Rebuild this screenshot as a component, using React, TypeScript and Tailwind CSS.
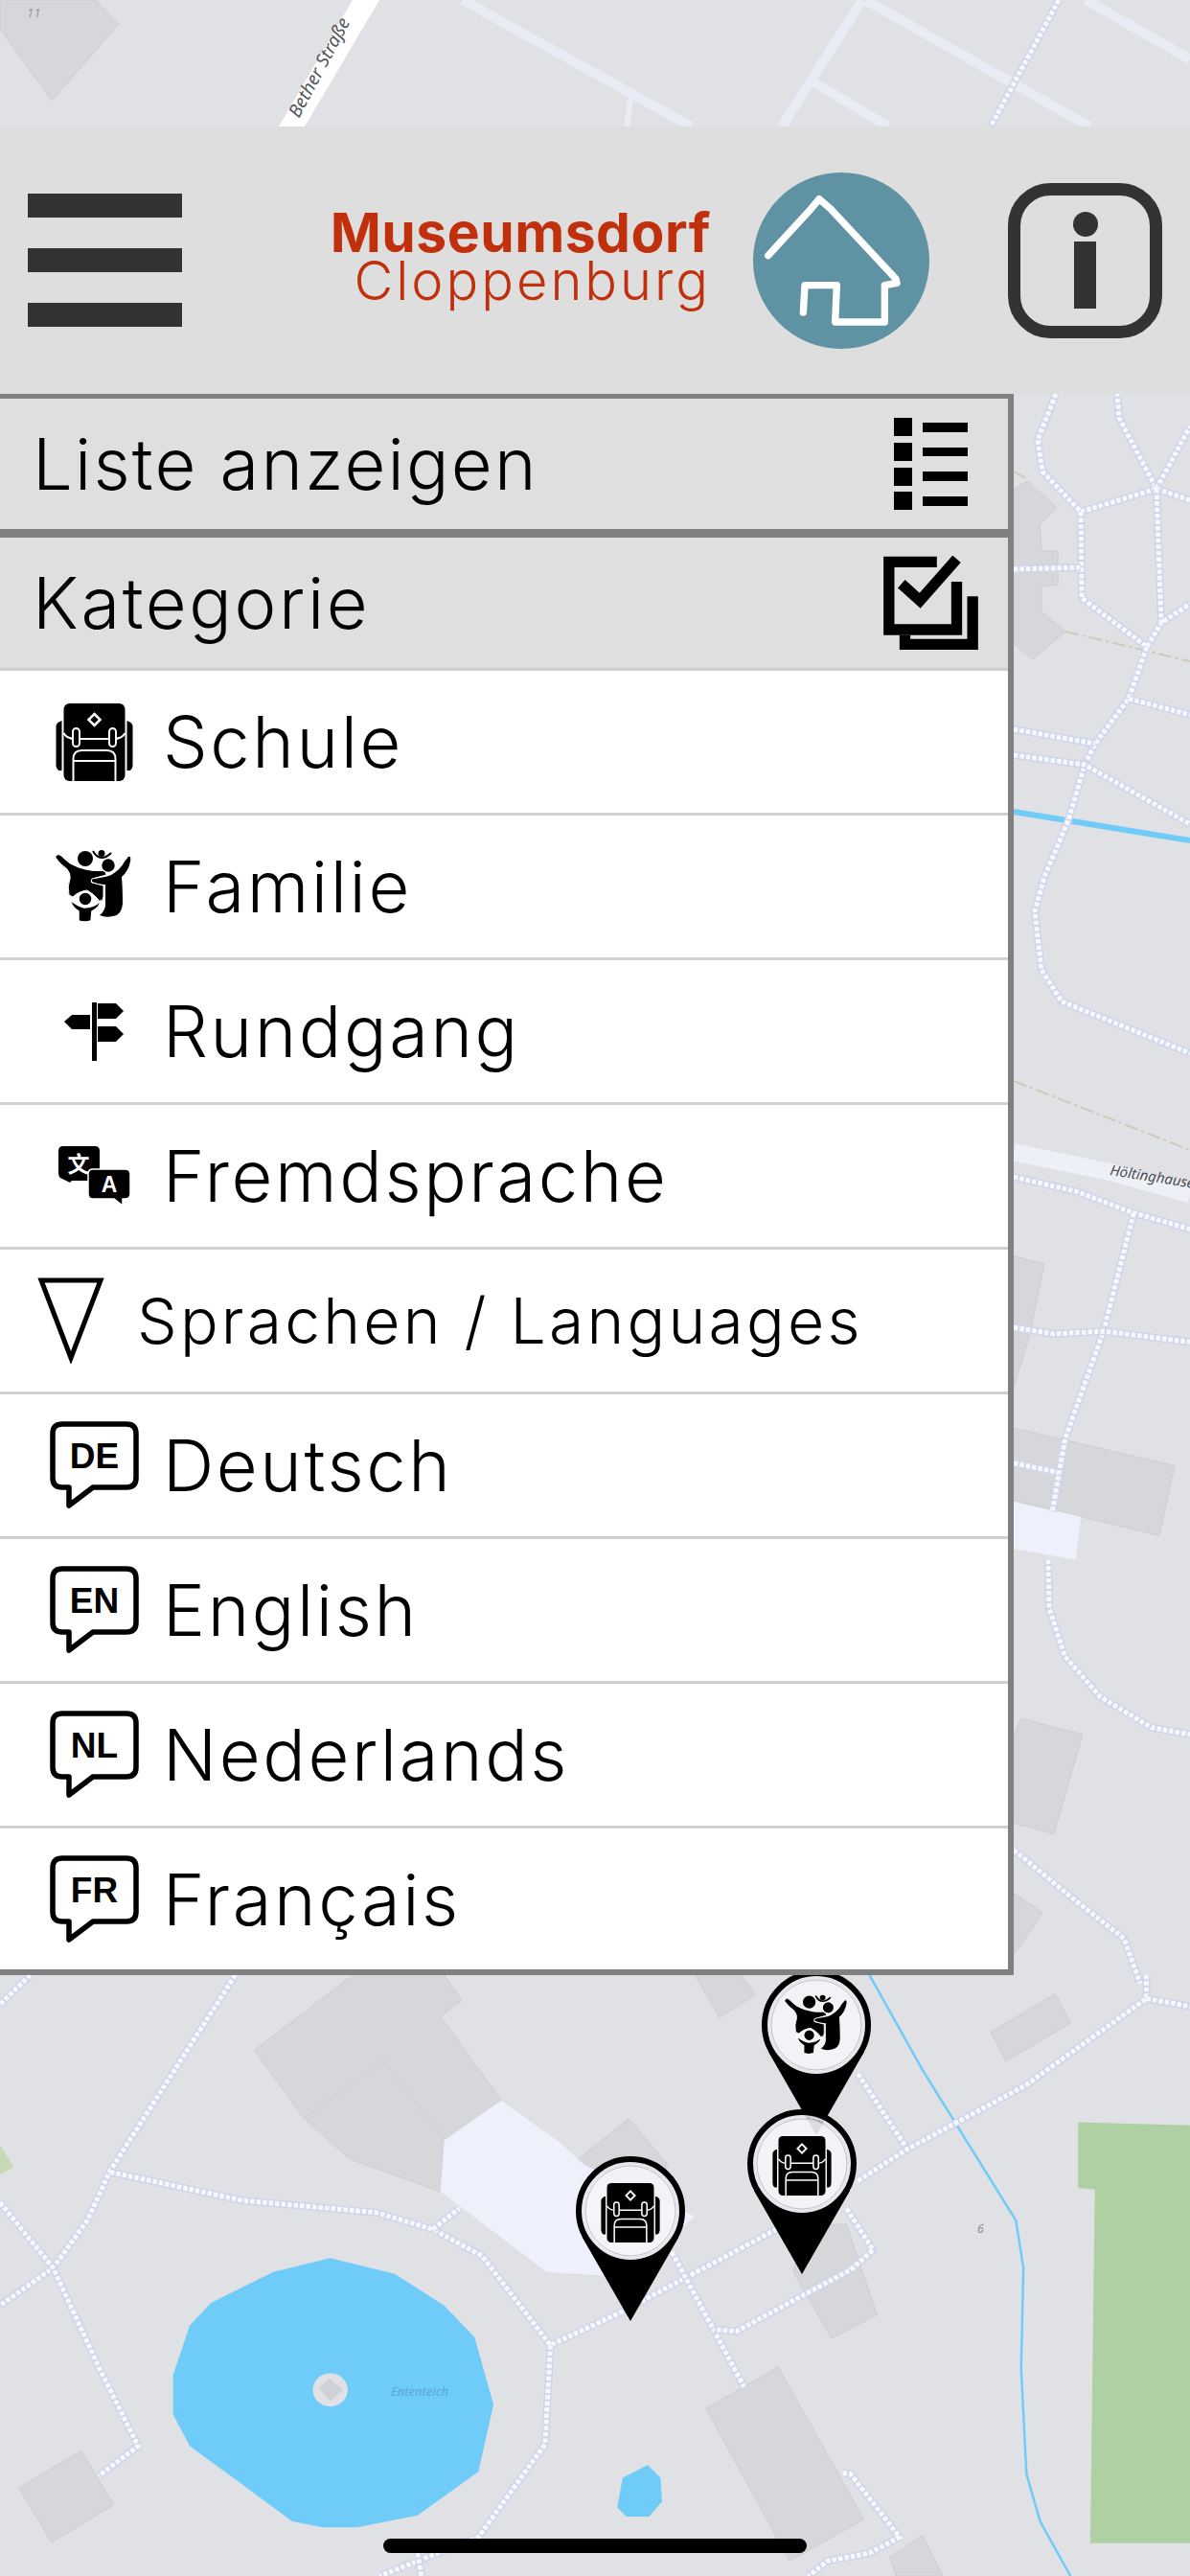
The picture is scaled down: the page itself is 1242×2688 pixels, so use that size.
import type { ReactNode } from 'react'

const BUILDING = '#d6d7db'
const WATER = '#6fcbf7'

// footpath: pale casing with a white dashed line on top
function Path({ d }: { d: string }) {
  return (
    <g fill="none">
      <polyline points={d} stroke="#d0d6ea" strokeWidth={8} vectorEffect="non-scaling-stroke" strokeLinejoin="round" />
      <polyline points={d} stroke="#f7f8fd" strokeWidth={5} strokeDasharray="4.5 2" vectorEffect="non-scaling-stroke" />
    </g>
  )
}

function Building({ d }: { d: string }) {
  return <polygon points={d} fill={BUILDING} stroke="#cdced2" strokeWidth={1} vectorEffect="non-scaling-stroke" />
}

function Backpack({ x, y, size = 80 }: { x?: number; y?: number; size?: number }) {
  return (
    <svg x={x} y={y} width={size} height={size} viewBox="0 0 80 81">
      <path d="M6 18 V70 H3 Q0 68 0 64 V24 Q0 20 6 18Z M74 18 V70 H77 Q80 68 80 64 V24 Q80 20 74 18Z" fill="#000" />
      <rect x="8" y="0" width="64" height="81" rx="6" fill="#000" />
      <path d="M8 31 Q11 37 20 37 H60 Q69 37 72 31" fill="none" stroke="#fff" strokeWidth="2" />
      <rect x="17.5" y="26" width="7" height="19" rx="3.5" fill="#000" stroke="#fff" strokeWidth="2" />
      <rect x="55.5" y="26" width="7" height="19" rx="3.5" fill="#000" stroke="#fff" strokeWidth="2" />
      <path d="M40 11 L46 17 L40 23 L34 17Z" fill="none" stroke="#fff" strokeWidth="2.5" />
      <path d="M18 81 V58 Q18 49 27 49 H53 Q62 49 62 58 V81 M18 60 H62" fill="none" stroke="#fff" strokeWidth="2" />
    </svg>
  )
}

function Family({ x, y, size = 80 }: { x?: number; y?: number; size?: number }) {
  return (
    <svg x={x} y={y} width={size} height={size} viewBox="0 0 80 76">
      <circle cx="31" cy="9" r="8" fill="#000" />
      <path d="M76 7 Q79 6 78 12 Q76 22 69 28 Q70 40 70 56 Q69 68 60 69 Q52 71 46 68 Q51 64 52 58 L52 36 Q44 36 38 33 L38 30 Q50 29 58 26 Q68 20 72 12Z" fill="#000" />
      <path d="M0 6 Q3 3 6 6 Q14 15 24 18 Q38 23 52 21 L53 26 L38 30 Q36 34 38 34 L50 37 L50 48 Q50 52 47 55 L44 51 Q40 46 33 42 Q24 43 18 49 L14 47 Q12 38 15 30 Q16 25 12 20 Q4 14 0 8Z" fill="#000" stroke="#fff" strokeWidth="1" />
      <path d="M15 52 Q22 58 30 60 Q40 60 47 53 Q46 60 38 64 L37 74 Q30 76 24 74 L24 64 Q17 60 15 52Z" fill="#000" stroke="#fff" strokeWidth="1.5" />
      <circle cx="31" cy="51" r="7" fill="#000" stroke="#fff" strokeWidth="1.5" />
      <circle cx="55" cy="16" r="7.5" fill="#000" stroke="#fff" strokeWidth="1.5" />
      <circle cx="48" cy="3.5" r="3.5" fill="#000" />
      <path d="M39 1 Q43 8 48 8 Q53 8 58 3" fill="none" stroke="#000" strokeWidth="2" />
    </svg>
  )
}

function Signpost() {
  return (
    <svg width="62" height="61" viewBox="0 0 62 61">
      <rect x="29" y="0" width="5" height="61" fill="#000" />
      <path d="M27 13 H8 L0 20 L8 28 H27Z M35 1 H54 L62 9 L54 17 H35Z M35 25 H54 L62 33 L54 41 H35Z" fill="#000" />
    </svg>
  )
}

function Translate() {
  return (
    <svg width="75" height="63" viewBox="0 0 75 63">
      <path d="M5 0 H38 Q43 0 43 5 V30 Q43 36 38 36 H14 L12 38 L4 34 Q0 33 0 28 V5 Q0 0 5 0Z" fill="#000" />
      <path d="M36 24 H69 Q75 24 75 29 V50 Q75 55 69 55 H67 V62 L58 55 H36 Q31 55 31 50 V29 Q31 24 36 24Z" fill="#000" stroke="#fff" strokeWidth="1.5" />
      <text x="21" y="27" textAnchor="middle" fontSize="23" fontWeight="700" fill="#fff" className="font-['Noto_Sans_CJK_SC',sans-serif]">文</text>
      <text x="53" y="48" textAnchor="middle" fontSize="23" fontWeight="700" fill="#fff" className="font-['Liberation_Sans',sans-serif]">A</text>
    </svg>
  )
}

function LangBubble({ code }: { code: string }) {
  return (
    <svg width="93" height="92" viewBox="0 0 93 92">
      <path d="M13 3 H80 Q90 3 90 13 V59 Q90 69 80 69 H45 L20 88 V69 H13 Q3 69 3 59 V13 Q3 3 13 3Z" fill="none" stroke="#000" strokeWidth="5.5" strokeLinejoin="round" />
      <text x="46.5" y="49" textAnchor="middle" fontSize="37" fontWeight="700" fill="#000" className="font-['Liberation_Sans',sans-serif]">{code}</text>
    </svg>
  )
}

// the head is see-through, so whatever lies under it shows faintly
function Pin({ x, y, children }: { x: number; y: number; children: ReactNode }) {
  return (
    <g transform={`translate(${x} ${y})`}>
      <path d="M-50 28 L0 115 L50 28 L44 26 A51 51 0 0 1 -44 26Z" fill="#000" />
      <circle r="48" fill="#f3f5f8" fillOpacity="0.9" />
      <circle r="52" fill="none" stroke="#e6e8ec" strokeOpacity="0.9" strokeWidth="8" />
      <circle r="54" fill="none" stroke="#000" strokeWidth="6" />
      <circle r="47" fill="none" stroke="#bfc1c4" strokeWidth="1" />
      {children}
    </g>
  )
}

function MapLayer() {
  return (
    <svg className="absolute inset-0" width="1242" height="2688" viewBox="0 0 1242 2688">
      <rect width="1242" height="2688" fill="#e0e1e5" />

      {/* top strip */}
      <g>
        <polygon points="0,0 100,0 124,25 54,105 0,30" fill={BUILDING} stroke="#cdced2" />
        <g stroke="#eaecf5" strokeWidth={10} fill="none">
          <line x1="483" y1="0" x2="721" y2="132" />
          <line x1="900" y1="0" x2="816" y2="132" />
          <line x1="903" y1="0" x2="1137" y2="132" />
          <line x1="848" y1="85" x2="927" y2="132" />
          <line x1="658" y1="103" x2="654" y2="132" strokeWidth={6} />
          <line x1="1133" y1="0" x2="1242" y2="62" />
        </g>
        <polygon points="368,0 396,0 318,132 291,132" fill="#fff" />
        <Path d="1105,0 1034,132" />
        <text x="28" y="18" fontSize="13" fontStyle="italic" fill="#9a9ba0" className="font-['Noto_Sans',sans-serif]">11</text>
        <text transform="translate(312 124) rotate(-62)" fontSize="19" fontStyle="italic" fill="#55565a" className="font-['Noto_Sans',sans-serif]">Bether Straße</text>
      </g>

      {/* strip right of the panel, upper half */}
      <g>
        <polygon points="1058,510 1073,502 1103,530 1085,548 1087,575 1104,575 1104,610 1087,612 1087,638 1112,659 1078,688 1058,672" fill={BUILDING} stroke="#cdced2" />
        <polyline points="1058,492 1072,500" stroke="#cfc9bb" strokeWidth="2" strokeDasharray="14 4 3 4" fill="none" />
        <polyline points="1112,659 1242,690" stroke="#cfc9bb" strokeWidth="2" strokeDasharray="14 4 3 4" fill="none" />
        <polyline points="1058,1128 1242,1200" stroke="#cfc9bb" strokeWidth="2" strokeDasharray="14 4 3 4" fill="none" />
        <polyline points="1058,847 1242,877" stroke={WATER} strokeWidth="6" fill="none" />
        <Path d="1102,411 1083,459 1088,492 1128,534 1207,510 1168,436 1166,411" />
        <Path d="1207,510 1242,445" />
        <Path d="1207,510 1242,522" />
        <Path d="1207,510 1212,650 1242,630" />
        <Path d="1128,534 1129,624 1197,675 1212,650" />
        <Path d="1197,675 1178,729 1143,776 1132,798 1115,856 1090,915 1080,951 1087,1012 1108,1045 1242,1099" />
        <Path d="1058,594 1128,592" />
        <Path d="1178,729 1242,746" />
        <Path d="1058,761 1143,776" />
        <Path d="1058,788 1132,798 1242,860" />
      </g>

      {/* strip right of the panel, lower half */}
      <g transform="translate(1040 1190) scale(0.3333 0.561)">
        <Building d="54,215 150,230 100,370 54,460" />
        <Building d="54,535 558,605 510,735 54,670" />
        <polygon points="54,672 265,700 248,780 54,760" fill="#eef1fb" />
        <Building d="54,1105 78,1075 270,1105 180,1290 54,1270" />
        <Building d="54,1400 145,1437 54,1515" />
        <polyline points="54,22 350,58 606,100" fill="none" stroke="#eef0f8" strokeWidth={18} vectorEffect="non-scaling-stroke" />
        <Path d="54,68 250,95 430,135 606,165" />
        <Path d="430,135 335,355 215,555 175,690" />
        <Path d="162,780 165,870 215,960 325,1035 485,1092 606,1105" />
        <Path d="54,348 180,360 335,355 606,375" />
        <Path d="54,600 195,618" />
        <Path d="54,1320 250,1415 400,1485 450,1568" />
      </g>
      <text transform="translate(1158 1226) rotate(9)" fontSize="15" fontStyle="italic" fill="#4a4b4f" className="font-['Noto_Sans',sans-serif]">Höltinghausen</text>

      {/* below the panel */}
      <g transform="translate(0 2040) scale(0.7924 0.4133)">
        <polygon points="1420,422 1568,430 1568,1485 1436,1485 1442,592 1420,588" fill="#afd0a3" />
        <polygon points="0,480 18,535 0,555" fill="#c7d9b3" />
        <Building d="335,240 465,50 585,50 608,115 580,155 660,365 585,470 580,597 460,515 400,412" />
        <polyline points="400,412 505,268 585,465" fill="none" stroke="#cdced2" vectorEffect="non-scaling-stroke" />
        <Building d="915,50 975,50 995,100 948,158" />
        <Building d="1305,195 1390,98 1410,172 1325,268" />
        <Building d="762,515 828,413 880,530 870,560 800,600" />
        <Building d="1060,680 1115,680 1155,908 1095,968 1045,800" />
        <Building d="930,1145 1025,1040 1138,1425 1040,1530" />
        <Building d="25,1345 107,1252 150,1388 68,1483" />
        <Building d="1172,1520 1215,1465 1242,1568 1180,1568" />
        <polygon points="660,367 735,470 770,530 915,660 880,720 800,810 720,800 580,597 585,468" fill="#eef1fb" />
        <polygon points="435,765 520,805 585,885 625,965 650,1135 630,1305 550,1415 470,1445 425,1445 385,1430 325,1345 250,1240 228,1160 228,1060 250,935 278,878 360,800" fill={WATER} />
        <polygon points="853,1288 870,1320 872,1380 855,1418 825,1418 813,1395 820,1320" fill={WATER} />
        <ellipse cx="435" cy="1098" rx="23" ry="42" fill="#e0e1e5" />
        <polygon points="433,1068 452,1098 435,1125 420,1095" fill="#cfd1d6" />
        <polyline points="1145,50 1215,290 1338,670 1348,790 1345,1045 1352,1310 1370,1430 1410,1568" fill="none" stroke={WATER} strokeWidth={2.5} vectorEffect="non-scaling-stroke" />
        <Path d="40,50 0,125" />
        <Path d="310,50 230,290 145,545 115,670 70,790 0,885" />
        <Path d="0,625 70,790 130,1040 182,1240 130,1315" />
        <Path d="145,548 320,620 495,650 570,692 635,760 725,985 820,900 1025,690" />
        <Path d="570,692 605,640" />
        <Path d="725,985 718,1235 630,1470 500,1568" />
        <Path d="1130,300 1195,490" />
        <Path d="1510,50 1510,110 1350,330 1195,490 1130,570" />
        <Path d="1510,110 1568,130" />
        <Path d="885,750 980,1090" />
        <Path d="1115,640 1150,745 1120,795 970,950 940,945" />
        <Path d="1110,1308 1120,1310 1185,1470 1145,1510 1090,1530 1065,1568" />
        <Path d="550,1510 555,1568" />
      </g>
      <text x="408" y="2500" fontSize="13" fontStyle="italic" fill="#5aa6d6" className="font-['Noto_Sans',sans-serif]">Ententeich</text>
      <text x="1020" y="2330" fontSize="12" fontStyle="italic" fill="#8a8b90" className="font-['Noto_Sans',sans-serif]">6</text>

      <Pin x={852} y={2113}><Family x={-33} y={-33} size={66} /></Pin>
      <Pin x={837} y={2258}><Backpack x={-31} y={-29} size={62} /></Pin>
      <Pin x={658} y={2307}><Backpack x={-31} y={-29} size={62} /></Pin>
    </svg>
  )
}

const rows: { label: string; icon: ReactNode }[] = [
  { label: 'Schule', icon: <Backpack size={81} /> },
  { label: 'Familie', icon: <Family size={80} /> },
  { label: 'Rundgang', icon: <Signpost /> },
  { label: 'Fremdsprache', icon: <Translate /> },
]

const languages = [
  { label: 'Deutsch', code: 'DE' },
  { label: 'English', code: 'EN' },
  { label: 'Nederlands', code: 'NL' },
  { label: 'Français', code: 'FR' },
]

function Row({ icon, label, last }: { icon: ReactNode; label: string; last?: boolean }) {
  return (
    <div className={`flex items-center bg-white ${last ? 'h-[147px]' : 'h-[151px] border-b-[3px] border-[#d0d0d0]'}`}>
      <div className="flex w-[170px] justify-center pl-[50px] pr-[24px]">{icon}</div>
      <span className="text-[74px] font-light leading-none tracking-[2.6px] text-black">{label}</span>
    </div>
  )
}

export default function App() {
  return (
    <div className="relative h-[2688px] w-[1242px] overflow-hidden font-['Inter',sans-serif]">
      <MapLayer />

      <div className="relative pt-[132px]">
        {/* Header */}
        <div className="flex h-[279px] items-center bg-[#dedede] pl-[29px] pr-[29px]">
          <div className="flex w-[161px] flex-col gap-[32px]">
            <div className="h-[25px] bg-[#333333]" />
            <div className="h-[25px] bg-[#333333]" />
            <div className="h-[25px] bg-[#333333]" />
          </div>
          <div className="ml-auto mb-[8px] flex flex-col items-end text-[#c0300c]">
            <span className="text-[57px] font-bold leading-[50px] tracking-[0.5px]">Museumsdorf</span>
            <span className="text-[56px] font-light leading-[50px] tracking-[3px]">Cloppenburg</span>
          </div>
          <div className="ml-[44px] h-[184px] w-[184px] rounded-full bg-[#5f93a3]">
            <svg width="184" height="184" viewBox="78 52 552 552">
              <path d="M125 312 L260 165 L285 135 L320 165 L525 385 L528 398 L490 405 V520 H335 L340 405 H240 L235 490" fill="none" stroke="#fff" strokeWidth="22" strokeLinecap="round" strokeLinejoin="round" />
            </svg>
          </div>
          <svg className="ml-[82px]" width="161" height="162" viewBox="0 0 161 162">
            <rect x="6.5" y="6.5" width="148" height="149" rx="38" fill="none" stroke="#333333" strokeWidth="13" />
            <circle cx="81" cy="43" r="13" fill="#333333" />
            <rect x="69" y="61" width="23" height="70" fill="#333333" />
          </svg>
        </div>

        {/* Menu panel */}
        <div className="w-[1058px] border-b-[6px] border-r-[6px] border-t-[5px] border-[#808080]">
          <div className="box-content flex h-[136px] items-center justify-between border-b-[9px] border-[#808080] bg-[#dfdfdf] pl-[34px] pr-[42px]">
            <span className="text-[74px] font-light leading-none tracking-[2.2px] text-black">Liste anzeigen</span>
            <svg width="77" height="96" viewBox="0 0 77 96" fill="#000">
              <rect x="0" y="0" width="19" height="19" />
              <rect x="0" y="26" width="19" height="19" />
              <rect x="0" y="52" width="19" height="19" />
              <rect x="0" y="77" width="19" height="19" />
              <rect x="30" y="5" width="47" height="10" />
              <rect x="30" y="31" width="47" height="9" />
              <rect x="30" y="56" width="47" height="10" />
              <rect x="30" y="82" width="47" height="10" />
            </svg>
          </div>
          <div className="flex h-[139px] items-center justify-between border-b-[3px] border-[#d0d0d0] bg-[#dfdfdf] pl-[34px] pr-[31px]">
            <span className="text-[74px] font-light leading-none tracking-[2.6px] text-black">Kategorie</span>
            <svg width="99" height="98" viewBox="66 482 296 294">
              <path d="M233 501 H83 V713 H295 V563" fill="none" stroke="#000" strokeWidth="34" />
              <path d="M345 609 V759 H133 V730" fill="none" stroke="#000" strokeWidth="34" />
              <path d="M122 570 L180 622 L295 492" fill="none" stroke="#000" strokeWidth="34" />
            </svg>
          </div>

          {rows.map(r => <Row key={r.label} icon={r.icon} label={r.label} />)}

          <div className="flex h-[151px] items-center border-b-[3px] border-[#d0d0d0] bg-white pl-[39px]">
            <svg width="70" height="90" viewBox="0 0 70 90">
              <path d="M4 3 H66 L35 84Z" fill="none" stroke="#000" strokeWidth="5" />
            </svg>
            <span className="ml-[34px] text-[66px] font-light leading-none tracking-[3.2px] text-black">Sprachen / Languages</span>
          </div>

          {languages.map((l, i) => (
            <Row key={l.code} icon={<LangBubble code={l.code} />} label={l.label} last={i === languages.length - 1} />
          ))}
        </div>
      </div>

      {/* home indicator */}
      <div className="absolute left-[400px] top-[2649px] h-[15px] w-[442px] rounded-full bg-black" />
    </div>
  )
}
